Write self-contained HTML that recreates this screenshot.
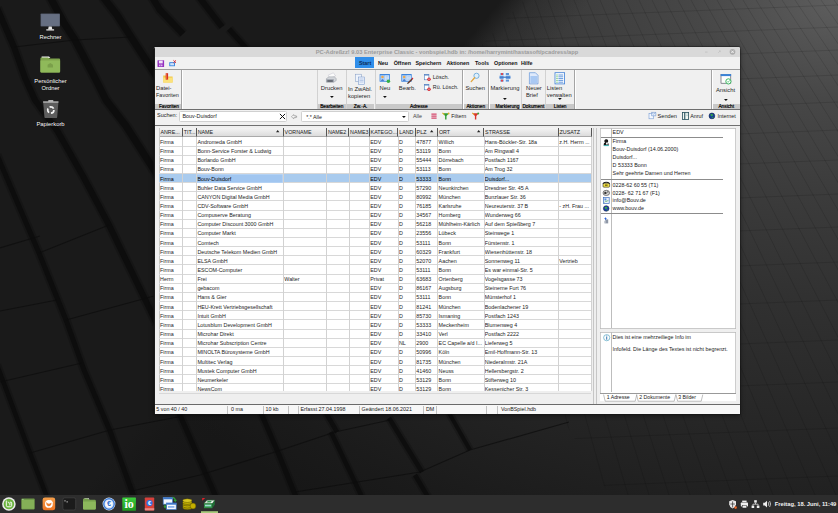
<!DOCTYPE html>
<html lang="de"><head><meta charset="utf-8"><title>PC-Adreßzz!</title>
<style>
html,body{margin:0;padding:0;}
body{width:838px;height:513px;overflow:hidden;position:relative;background:#1b1b1b;font-family:"Liberation Sans",sans-serif;font-size:5.35px;color:#1a1a1a;}
div,span{position:absolute;white-space:nowrap;box-sizing:border-box;}
svg{position:absolute;overflow:visible;}
.t{line-height:9px;height:9px;}
.dl{font-family:"Liberation Sans",sans-serif;font-size:5.83px;color:#fff;text-align:center;text-shadow:0 0.4px 0.8px #000;line-height:7.3px;}
.win{left:154px;top:47px;width:586px;height:367.2px;background:#efefef;}
.tb{left:0;top:0;width:586px;height:10px;background:#d9d9d9;}
.title{left:0;width:586px;top:0;height:10px;line-height:10.5px;text-align:center;font-family:"Liberation Sans",sans-serif;font-weight:bold;font-size:5.73px;color:#9b9b9b;}
.menu span{font-weight:bold;font-size:5.35px;top:0;line-height:12px;color:#111;}
.rb{font-size:5.8px;color:#262626;text-align:left;line-height:6.6px;}
.gl{background:#c9c9c9;height:6px;top:56.5px;font-size:4.8px;line-height:6.6px;text-align:center;color:#000;-webkit-text-stroke:0.18px #000;}
.vs{width:1.6px;top:23px;height:39.5px;background:linear-gradient(90deg,#a4a4a4 0,#a4a4a4 40%,#fff 60%);}
.hd{top:0;height:9.6px;background:linear-gradient(#f4f4f4,#dcdcdc);border-right:0.8px solid #555;border-bottom:0.6px solid #aaa;font-size:5.35px;line-height:9.6px;padding-left:0.8px;color:#1a1a1a;overflow:hidden;}
.row{left:0;height:9.15px;width:432px;border-bottom:0.55px solid #d8d8d8;}
.row span{top:0.56px;line-height:9.15px;height:9px;overflow:hidden;color:#1c1c1c;padding-left:1.5px;}
.sel{background:#a9cbee;}
.sel span{color:#000;}
.sb span{top:0;line-height:9.6px;font-size:5.35px;color:#222;}
.sb i{position:absolute;top:1.5px;height:8px;width:0.7px;background:#c2c2c2;}
.rp span{font-size:5.35px;color:#222;line-height:7.8px;}
</style></head><body>

<div id="wall" style="left:0;top:0;width:838px;height:495px;background:
linear-gradient(130.4deg, #1a1a1a 0%, #1a1a1a 39.8%, rgba(26,26,26,0.35) 42.4%, rgba(26,26,26,0) 47%),
radial-gradient(ellipse 880px 620px at 100% 0%, #5e5e5e 0%, #525252 8%, #474747 16%, #3b3b3b 32%, #313131 48%, #292929 64%, #222 78%, #1b1b1b 91%, #171717 100%);"></div>
<svg width="838" height="495" viewBox="0 0 838 495" style="left:0;top:0">
<g stroke="#0b0b0b" fill="none" opacity="0.28" stroke-linejoin="round">
<path d="M-3,8 L14,47 L25,78 L35,100 L58,132 L84,178 L109,225 L157,324" stroke-width="10.0"/>
<path d="M50,-3 L64,23 L75,40 L97,82 L106,100 L126,126 L158,176" stroke-width="11.0"/>
<path d="M103,-3 L117,15 L131,37 L157,77" stroke-width="11.0"/>
<path d="M152,-3 L160,10 L183,34" stroke-width="10.5"/>
<path d="M199,-3 L222,27" stroke-width="10.0"/>
<path d="M229,29 L247,49" stroke-width="9.0"/>
<path d="M-3,155 L39,253 L66,320 L84,370 L110,431 L134,497" stroke-width="9.0"/>
<path d="M-3,365 L30,453 L47,497" stroke-width="8.5"/>
<path d="M179,413 L216,497" stroke-width="9.0"/>
<path d="M261,413 L277,450 L296,497" stroke-width="9.0"/>
<path d="M326,413 L337,432 M331,432 L362,497" stroke-width="8.5"/>
<path d="M389,418 L422,472 M415,475 L428,497" stroke-width="8.5"/>
<path d="M449,413 L470,450" stroke-width="8.0"/>
</g>
<g stroke="#0b0b0b" fill="none" opacity="0.75" stroke-linejoin="round">
<path d="M-3,8 L14,47 L25,78 L35,100 L58,132 L84,178 L109,225 L157,324" stroke-width="6"/>
<path d="M50,-3 L64,23 L75,40 L97,82 L106,100 L126,126 L158,176" stroke-width="7"/>
<path d="M103,-3 L117,15 L131,37 L157,77" stroke-width="7"/>
<path d="M152,-3 L160,10 L183,34" stroke-width="6.5"/>
<path d="M199,-3 L222,27" stroke-width="6"/>
<path d="M229,29 L247,49" stroke-width="5"/>
<path d="M-3,155 L39,253 L66,320 L84,370 L110,431 L134,497" stroke-width="5"/>
<path d="M-3,365 L30,453 L47,497" stroke-width="4.5"/>
<path d="M179,413 L216,497" stroke-width="5"/>
<path d="M261,413 L277,450 L296,497" stroke-width="5"/>
<path d="M326,413 L337,432 M331,432 L362,497" stroke-width="4.5"/>
<path d="M389,418 L422,472 M415,475 L428,497" stroke-width="4.5"/>
<path d="M449,413 L470,450" stroke-width="4"/>
</g>
<g stroke="#0d0d0d" stroke-width="1.2" opacity="0.7" fill="none">
<path d="M0,311 L57,300 M0,382 L82,363 M30,453 L110,430 L183,416 M132,491 L200,475 L275,452 L335,432 L390,420 M0,248 L40,236 M66,320 L154,296 M39,253 L109,225 M295,492 L420,472 L470,450 L569,422 M14,47 L75,40 L131,37"/>
</g>
<defs><clipPath id="lit"><polygon points="524,0 838,0 838,495 610,495 560,415 480,47"/></clipPath></defs>
<g stroke="#000" stroke-width="0.7" opacity="0.17" fill="none" clip-path="url(#lit)">
<path d="M440,21 L838,5 M440,43 L838,27 M440,66 L838,50 M440,91 L838,75 M440,118 L838,102 M440,146 L838,130 M440,176 L838,160 M440,210 L838,194 M440,243 L838,227 M440,278 L838,262 M440,316 L838,300 M440,356 L838,340 M440,398 L838,382 M440,444 L838,428 M440,492 L838,476 M470,0 L607,495 M483,0 L628,495 M496,0 L649,495 M509,0 L669,495 M522,0 L690,495 M535,0 L711,495 M548,0 L732,495 M561,0 L753,495 M574,0 L773,495 M587,0 L794,495 M600,0 L815,495 M613,0 L836,495 M626,0 L857,495 M639,0 L877,495 M652,0 L898,495 M665,0 L919,495 M678,0 L940,495 M691,0 L961,495 M704,0 L981,495 M717,0 L1002,495 M730,0 L1023,495 M743,0 L1044,495 M756,0 L1065,495 M769,0 L1085,495 M782,0 L1106,495 M795,0 L1127,495 M808,0 L1148,495 M821,0 L1169,495 M834,0 L1189,495 M847,0 L1210,495 M860,0 L1231,495 M873,0 L1252,495 M886,0 L1273,495 M899,0 L1293,495 M912,0 L1314,495 M925,0 L1335,495 M938,0 L1356,495 M951,0 L1377,495 M964,0 L1397,495 M977,0 L1418,495 M990,0 L1439,495 M1003,0 L1460,495 M1016,0 L1481,495 M1029,0 L1501,495 M1042,0 L1522,495 M1055,0 L1543,495 M1068,0 L1564,495 M1081,0 L1585,495 M1094,0 L1605,495 M457,0 L586,495 M444,0 L565,495 M431,0 L545,495 M418,0 L524,495 M405,0 L503,495 M392,0 L482,495 M379,0 L461,495 M366,0 L441,495 M353,0 L420,495 M340,0 L399,495 M327,0 L378,495 M314,0 L357,495 M301,0 L337,495 M288,0 L316,495 M275,0 L295,495 M262,0 L274,495 M249,0 L253,495 M236,0 L233,495 M223,0 L212,495 M210,0 L191,495 M197,0 L170,495 M184,0 L149,495 M171,0 L129,495 M158,0 L108,495"/>
</g>
</svg>

<!-- desktop icons -->
<svg style="left:40px;top:13px" width="21" height="19" viewBox="0 0 21 19"><rect x="0.5" y="0.5" width="19.5" height="13" rx="0.8" fill="#4f5767"/><rect x="1.1" y="1.1" width="18.3" height="11.8" fill="#666f82"/><path d="M8.7,13.5 h3 l0.6,3 h-4.2z" fill="#e8e8e8"/><rect x="6.3" y="16.3" width="7.8" height="1.2" fill="#f4f4f4"/></svg>
<div class="dl" style="left:20px;top:34px;width:61px">Rechner</div>
<svg style="left:40px;top:56.3px" width="22" height="19" viewBox="0 0 22 19"><path d="M1.6,0.4 h7.4 l1.4,1.6 h-8.8z" fill="#f2f2f2"/><path d="M0.4,2.4 q0,-1 1,-1 h6.6 l1.5,1.2 h9.6 q1,0 1,1 v11.8 q0,1 -1,1 h-17.7 q-1,0 -1,-1z" fill="#7ea34c"/><path d="M0.4,4.4 h19.7 v11 q0,1 -1,1 h-17.7 q-1,0 -1,-1z" fill="#8fb95a"/><path d="M7.6,11.6 v-2.8 l2.7,-1.9 l2.7,1.9 v2.8z" fill="#7a9f4a"/></svg>
<div class="dl" style="left:20px;top:77.5px;width:61px">Persönlicher<br>Ordner</div>
<svg style="left:41.5px;top:99px" width="18" height="21" viewBox="0 0 18 21"><path d="M1.2,3.3 h15.2 l-1.2,14.6 q-0.1,1.2 -1.3,1.2 h-10.2 q-1.2,0 -1.3,-1.2z" fill="#5d5d5d"/><rect x="1" y="2.4" width="15.6" height="1.1" rx="0.4" fill="#f0f0f0"/><rect x="6.2" y="1.2" width="5.2" height="1.3" rx="0.5" fill="#e4e4e4"/><circle cx="8.8" cy="11" r="3.1" fill="none" stroke="#f4f4f4" stroke-width="1.7" stroke-dasharray="4.6 1.9"/></svg>
<div class="dl" style="left:20px;top:121px;width:61px">Papierkorb</div>

<div class="win" style="border-radius:1.5px 1.5px 0 0;overflow:hidden;box-shadow:0 0 0 0.7px rgba(20,20,20,0.5),0 1px 5px rgba(0,0,0,0.5)">
<div class="tb"></div><div class="title">PC-Adreßzz! 9.03 Enterprise Classic - vonbspiel.hdb in: /home/harrymint/hastasoft/pcadress/app</div>
<svg style="left:540px;top:0" width="46" height="10" viewBox="0 0 46 10"><rect x="11" y="4.7" width="2.6" height="0.7" fill="#bcbcbc"/><path d="M24.2,5.9 l2,-2 M25,3.8 h1.3 v1.3" stroke="#bcbcbc" stroke-width="0.6" fill="none"/><circle cx="38.5" cy="4.8" r="2.85" fill="#adadad"/><path d="M37.3,3.6 l2.4,2.4 M39.7,3.6 l-2.4,2.4" stroke="#f2f2f2" stroke-width="0.95"/></svg>
<div style="left:0;top:10px;width:586px;height:12px;background:#f1f1f1"></div>
<svg style="left:3.3px;top:12.8px" width="20" height="8" viewBox="0 0 20 8"><rect x="0.5" y="0.3" width="6.6" height="6.6" rx="0.5" fill="#9430c0"/><rect x="1.9" y="0.6" width="3.8" height="2.8" fill="#f1e6f8"/><rect x="2.2" y="4.6" width="3.2" height="1.6" fill="#ead6f4"/><rect x="3.4" y="4.6" width="0.8" height="1.6" fill="#9430c0"/><rect x="12.3" y="2.2" width="5.6" height="4" fill="#2f7fe0"/><rect x="13.2" y="3.1" width="3.8" height="2.3" fill="#cfe3fb"/><path d="M16.4,0.3 l2.6,2.6 M19,0.3 l-2.6,2.6" stroke="#d8232a" stroke-width="0.9"/></svg>
<div style="left:201px;top:10.2px;width:18.6px;height:11.3px;background:#2f8eea"></div>
<div class="menu" style="left:0;top:10px;width:586px;height:12px">
<span style="left:205px;color:#0b2a55;">Start</span>
<span style="left:224px;">Neu</span>
<span style="left:239.7px;">Öffnen</span>
<span style="left:261.5px;">Speichern</span>
<span style="left:292.5px;">Aktionen</span>
<span style="left:321px;">Tools</span>
<span style="left:340px;">Optionen</span>
<span style="left:367px;">Hilfe</span>
</div>
<div style="left:0;top:21.7px;width:586px;height:0.8px;background:#9c9c9c"></div>
<div style="left:0;top:22.9px;width:586px;height:39.4px;background:#f0f0f0"></div>
<div class="gl" style="left:0px;width:27px;padding-left:2.8px;">Favoriten</div>
<div class="gl" style="left:164px;width:27.5px;">Bearbeiten</div>
<div class="gl" style="left:193px;width:27.30000000000001px;">Zw.-A.</div>
<div class="gl" style="left:222px;width:85.80000000000001px;">Adresse</div>
<div class="gl" style="left:309.5px;width:24.5px;">Aktionen</div>
<div class="gl" style="left:335.6px;width:30.69999999999999px;padding-left:5px;">Markierung</div>
<div class="gl" style="left:368px;width:22.69999999999999px;">Dokument</div>
<div class="gl" style="left:392.3px;width:27.69999999999999px;">Listen</div>
<div class="gl" style="left:558.5px;width:27.5px;">Ansicht</div>
<div class="vs" style="left:27px"></div>
<div class="vs" style="left:162.5px"></div>
<div class="vs" style="left:191.7px"></div>
<div class="vs" style="left:220.5px"></div>
<div class="vs" style="left:308px"></div>
<div class="vs" style="left:334.2px"></div>
<div class="vs" style="left:366.5px"></div>
<div class="vs" style="left:390.9px"></div>
<div class="vs" style="left:420.2px"></div>
<div class="vs" style="left:557px"></div>
<div style="left:0;top:62.3px;width:586px;height:0.9px;background:#6e6e6e"></div>
<div class="rb" style="left:2px;top:38px">Datei-<br><span style="position:static;font-size:5.5px">Favoriten</span></div>
<div class="rb" style="left:166.8px;top:38px">Drucken</div>
<svg style="left:176.1px;top:49.4px" width="3.8" height="2.1" viewBox="0 0 3.8 2.1"><path d="M0,0 h3.8 l-1.9,2.1z" fill="#111"/></svg>
<div class="rb" style="left:194px;top:39.4px">In ZwAbl.<br>kopieren</div>
<div class="rb" style="left:225.6px;top:38px">Neu</div>
<svg style="left:229.1px;top:49.4px" width="3.8" height="2.1" viewBox="0 0 3.8 2.1"><path d="M0,0 h3.8 l-1.9,2.1z" fill="#111"/></svg>
<div class="rb" style="left:244.8px;top:38px">Bearb.</div>
<div class="rb" style="left:278.8px;top:26.8px;font-size:5.5px">Lösch.</div>
<div class="rb" style="left:278.8px;top:37px;font-size:5.35px">Rü. Lösch.</div>
<div class="rb" style="left:311.4px;top:38px">Suchen</div>
<div class="rb" style="left:336.4px;top:38px">Markierung</div>
<svg style="left:349.1px;top:50.5px" width="3.8" height="2.1" viewBox="0 0 3.8 2.1"><path d="M0,0 h3.8 l-1.9,2.1z" fill="#111"/></svg>
<div class="rb" style="left:372px;top:38px">Neuer<br>Brief</div>
<div class="rb" style="left:392.8px;top:38px">Listen<br>verwalten</div>
<svg style="left:404.1px;top:51.4px" width="3.8" height="2.1" viewBox="0 0 3.8 2.1"><path d="M0,0 h3.8 l-1.9,2.1z" fill="#111"/></svg>
<div class="rb" style="left:562px;top:39.6px">Ansicht</div>
<svg style="left:570.1px;top:52px" width="3.8" height="2.1" viewBox="0 0 3.8 2.1"><path d="M0,0 h3.8 l-1.9,2.1z" fill="#111"/></svg>
<svg style="left:0;top:23px" width="586" height="40" viewBox="0 0 586 40">
<!-- Datei-Favoriten -->
<g transform="translate(0.9,0)"><path d="M8.3,5.5 h3 l0.8,0.9 h5.6 v6.2 h-9.4z" fill="#f1c84a"/><rect x="8.3" y="7.6" width="9.4" height="5" fill="#fbe27a"/><rect x="10.8" y="3.2" width="2.4" height="6.4" fill="#d12a1f"/><rect x="11.4" y="3.2" width="0.8" height="6.4" fill="#f27b4e"/></g>
<!-- Drucken -->
<g><path d="M174.2,5.2 l5.2,-2.4 l2.2,3.2 l-5.6,2.4z" fill="#fbfbfb" stroke="#aab" stroke-width="0.35"/><path d="M172.4,8.6 l2.6,-1.8 h5.2 l2,1.6 v2.2 l-2.4,1.6 h-7.4z" fill="#d2d5da" stroke="#777c85" stroke-width="0.35"/><path d="M172.4,9.2 h7.4 v3 h-7.4z" fill="#9a9fa8"/><path d="M173.4,10.6 h5.4 v1 h-5.4z" fill="#3b3f46"/></g>
<!-- Kopieren -->
<g><rect x="201.3" y="4.2" width="6" height="7.2" fill="#eef3fb" stroke="#7f97c0" stroke-width="0.5"/><rect x="204.3" y="7" width="6.4" height="7.6" fill="#eaf0fa" stroke="#6f8fc5" stroke-width="0.5"/><path d="M205.5,9 h4 M205.5,10.5 h4 M205.5,12 h4" stroke="#8aa6d6" stroke-width="0.5"/></g>
<!-- Neu -->
<g><rect x="225.6" y="3.9" width="10.4" height="7.8" rx="0.5" fill="#3f86dd"/><rect x="226.29999999999998" y="5.2" width="9" height="5.8" fill="#a9cdf6"/><rect x="231.0" y="5.6" width="3.8" height="4.8" fill="#dcebfc"/><circle cx="228.5" cy="6.9" r="1.25" fill="#f2a84a"/><path d="M226.79999999999998,10.8 q1.7,-3.2 3.4,0z" fill="#2f62c0"/><path d="M231.5,6.6 h2.8 M231.5,8 h2.8 M231.5,9.4 h2.8" stroke="#8fb4e8" stroke-width="0.5"/><circle cx="234.4" cy="11.3" r="1.75" fill="#35b045"/></g>
<!-- Bearb -->
<g><rect x="247.3" y="3.9" width="10.4" height="7.8" rx="0.5" fill="#3f86dd"/><rect x="248.0" y="5.2" width="9" height="5.8" fill="#a9cdf6"/><rect x="252.70000000000002" y="5.6" width="3.8" height="4.8" fill="#dcebfc"/><circle cx="250.20000000000002" cy="6.9" r="1.25" fill="#f2a84a"/><path d="M248.5,10.8 q1.7,-3.2 3.4,0z" fill="#2f62c0"/><path d="M253.20000000000002,6.6 h2.8 M253.20000000000002,8 h2.8 M253.20000000000002,9.4 h2.8" stroke="#8fb4e8" stroke-width="0.5"/><path d="M253.6,12.6 l4,-4.2 l1.1,1 l-4,4.2z" fill="#6a3a2a"/><path d="M257.6,8.4 l1.1,1 l0.7,-0.8 l-1.1,-1z" fill="#d8232a"/><path d="M253.6,12.6 l1.1,1 l-1.5,0.5z" fill="#222"/></g>
<!-- Loesch -->
<g><rect x="270.3" y="4.4" width="4.6" height="5.4" fill="#fff" stroke="#4f7fc0" stroke-width="0.6"/><rect x="270.3" y="4.4" width="4.6" height="1.1" fill="#4f7fc0"/><circle cx="275" cy="9.2" r="1.7" fill="#d8232a"/><path d="M274.3,8.5 l1.4,1.4 M275.7,8.5 l-1.4,1.4" stroke="#fff" stroke-width="0.45"/></g>
<g><rect x="270.3" y="14.4" width="4.6" height="5.4" fill="#fff" stroke="#4f7fc0" stroke-width="0.6"/><rect x="270.3" y="14.4" width="4.6" height="1.1" fill="#4f7fc0"/><circle cx="275" cy="19.2" r="1.7" fill="#d8232a"/><path d="M274.3,18.5 l1.4,1.4 M275.7,18.5 l-1.4,1.4" stroke="#fff" stroke-width="0.45"/></g>
<!-- Suchen -->
<g><circle cx="322.5" cy="5.8" r="2.6" fill="#dff0fb" stroke="#5c9fd6" stroke-width="0.8"/><path d="M320.6,7.8 l-3.4,3.8" stroke="#e2a53a" stroke-width="1.3" stroke-linecap="round"/></g>
<!-- Markierung -->
<g><rect x="346.4" y="3" width="8.6" height="2" fill="#5d95d8"/><rect x="346.4" y="9.6" width="8.6" height="2" fill="#5d95d8"/><rect x="345.6" y="5.6" width="10.8" height="3.4" fill="#6da0e0"/><rect x="349.6" y="2.4" width="2.2" height="10" fill="#e9f1fc"/><rect x="347" y="3.1" width="2" height="1.8" fill="#e5434a"/><rect x="347" y="9.7" width="2" height="1.8" fill="#e5434a"/><rect x="345.6" y="6.6" width="10.8" height="1.2" fill="#3f78c8"/></g>
<!-- Neuer Brief -->
<g><path d="M375.4,2.7 h6 l2.6,2.6 v8.6 h-8.6z" fill="#dfeafb" stroke="#4d86d3" stroke-width="0.6"/><path d="M376.4,6 h6.6 v7 h-6.6z" fill="#a9c9f3"/></g>
<!-- Listen -->
<g><rect x="401" y="2.7" width="9.6" height="11.2" fill="#fff" stroke="#3e7fd6" stroke-width="0.8"/><path d="M404.4,5 h4.8 M404.4,6.8 h4.8 M404.4,8.6 h4.8 M404.4,10.4 h4.8 M404.4,12.2 h4.8" stroke="#3e7fd6" stroke-width="0.8"/><path d="M402.4,5 h1.2 M402.4,6.8 h1.2 M402.4,8.6 h1.2 M402.4,10.4 h1.2 M402.4,12.2 h1.2" stroke="#3fae4a" stroke-width="0.9"/></g>
<!-- Ansicht -->
<g><rect x="567" y="4.4" width="9.8" height="8.8" fill="#fdfdfd" stroke="#334" stroke-width="0.55"/><rect x="566.7" y="4.1" width="10.4" height="2" fill="#3a83d8"/><circle cx="574.4" cy="11.4" r="2.6" fill="#fff" stroke="#2fb257" stroke-width="0.95"/><path d="M573.2,11.4 l0.9,0.9 l1.6,-1.9" stroke="#2fb257" stroke-width="0.7" fill="none"/></g>
</svg>
<div style="left:0;top:63.2px;width:586px;height:15.4px;background:#f1f1f1"></div>
<div style="left:0;top:78.4px;width:586px;height:0.9px;background:#707070"></div>
<span style="left:3px;top:64.4px;line-height:8px;font-size:5.5px;color:#222">Suchen:</span>
<div style="left:24.6px;top:64.2px;width:108.6px;height:11px;background:#fff;border:0.6px solid #d0d0d0;border-radius:1.4px"></div>
<span style="left:28.5px;top:65.4px;line-height:8px;font-size:5.4px;color:#222">Bouv-Duisdorf</span>
<svg style="left:125px;top:66.3px" width="8" height="8" viewBox="0 0 8 8"><path d="M0.9,0.9 l5.2,5.2 M6.1,0.9 l-5.2,5.2" stroke="#111" stroke-width="1"/></svg>
<svg style="left:136.5px;top:66.7px" width="8" height="6" viewBox="0 0 8 6"><path d="M0.4,2.7 l2.4,-2.1 v1.2 h2.2 v1.8 h-2.2 v1.2z" fill="#fafafa" stroke="#777" stroke-width="0.5"/><path d="M5.6,1.8 v1.8" stroke="#777" stroke-width="0.5"/></svg>
<div style="left:147.4px;top:64.2px;width:108px;height:11px;background:#fff;border:0.6px solid #d0d0d0;border-radius:1.4px"></div>
<span style="left:152.3px;top:65.7px;line-height:8px;font-size:5.3px;color:#222">*.* Alle</span>
<svg style="left:248.1px;top:69.2px" width="3.8" height="2.1" viewBox="0 0 3.8 2.1"><path d="M0,0 h3.8 l-1.9,2.1z" fill="#111"/></svg>
<span style="left:259px;top:64.6px;line-height:8px;font-size:5.35px;color:#444">Alle</span>
<svg style="left:276px;top:64.6px" width="60" height="9" viewBox="0 0 60 9">
<path d="M1.4,2 h5.2 M1.4,4.1 h5.2 M1.4,6.2 h5.2" stroke="#d3476b" stroke-width="1.25"/>
<path d="M12.6,1.2 h6.4 l-2.5,2.9 v3.4 h-1.4 v-3.4z" fill="#2f9e35"/><path d="M12.4,0.8 l2,1.8" stroke="#e0b020" stroke-width="1.1"/><circle cx="18.6" cy="1.5" r="0.9" fill="#e0b020"/>
<path d="M42.4,1.2 h6.4 l-2.5,2.9 v3.4 h-1.4 v-3.4z" fill="#d9342b"/><path d="M42.2,0.8 l2,1.8" stroke="#e3a72a" stroke-width="1.1"/><circle cx="48.2" cy="1.6" r="1" fill="#3aa33a"/>
</svg>
<span style="left:297.3px;top:64.6px;line-height:8px;font-size:5.35px;color:#222">Filtern</span>
<svg style="left:494px;top:64px" width="92" height="10" viewBox="0 0 92 10">
<rect x="1" y="2.4" width="4.6" height="5.4" fill="#f4f8ff" stroke="#6c93cf" stroke-width="0.55"/><path d="M3.6,1.4 h4.2 v3.4 h-4.2z" fill="#e4eefc" stroke="#5c86c6" stroke-width="0.5"/><path d="M3.6,1.4 l2.1,1.8 l2.1,-1.8" stroke="#5c86c6" stroke-width="0.4" fill="none"/>
<rect x="34.4" y="1.4" width="6.2" height="7" fill="#f2f7f4" stroke="#234f5c" stroke-width="0.8"/><rect x="36.2" y="1.4" width="1.1" height="7" fill="#234f5c"/><path d="M38.2,3 h1.6 M38.2,4.6 h1.6" stroke="#7aa" stroke-width="0.5"/>
<circle cx="63.9" cy="4.9" r="2.9" fill="#173f9a"/><path d="M62.2,3.4 q1.8,-1.2 3,0.4 q-0.4,1.8 -2,1.4z M64,6.2 q1.6,-0.4 1.8,0.6 q-1.2,1 -1.8,-0.6z" fill="#36a844"/><circle cx="63.9" cy="4.9" r="2.9" fill="none" stroke="#0a1a3a" stroke-width="0.5"/>
</svg>
<span style="left:503.6px;top:64.5px;line-height:8px;font-size:5.6px;color:#222">Senden</span>
<span style="left:536.3px;top:64.5px;line-height:8px;font-size:5.35px;color:#222">Anruf</span>
<span style="left:563.5px;top:64.5px;line-height:8px;font-size:5.35px;color:#222">Internet</span>
<div style="left:5px;top:80.8px;width:432.5px;height:263.2px;background:#fff;overflow:hidden;box-shadow:inset 0.7px 0 0 #b0b0b0">
<div class="hd" style="left:0.6px;width:23.3px">ANRE...</div>
<div class="hd" style="left:23.9px;width:14.0px">TIT...</div>
<div class="hd" style="left:37.9px;width:86.9px">NAME</div>
<div class="hd" style="left:124.8px;width:43.3px">VORNAME</div>
<div class="hd" style="left:168.1px;width:22.2px">NAME2</div>
<div class="hd" style="left:190.3px;width:20.5px">NAME3</div>
<div class="hd" style="left:210.8px;width:28.6px">KATEGO...</div>
<div class="hd" style="left:239.4px;width:17.4px">LAND</div>
<div class="hd" style="left:256.8px;width:22.3px">PLZ</div>
<div class="hd" style="left:279.1px;width:46.2px">ORT</div>
<div class="hd" style="left:325.3px;width:74.5px">STRASSE</div>
<div class="hd" style="left:399.8px;width:32.8px">ZUSATZ</div>
<svg style="left:116.9px;top:1.9px" width="3.4" height="2.2" viewBox="0 0 3.4 2.2"><path d="M0,2.2 h3.4 l-1.7,-2.2z" fill="#222"/></svg>
<svg style="left:271.4px;top:1.9px" width="3.4" height="2.2" viewBox="0 0 3.4 2.2"><path d="M0,2.2 h3.4 l-1.7,-2.2z" fill="#222"/></svg>
<svg style="left:317.5px;top:1.9px" width="3.4" height="2.2" viewBox="0 0 3.4 2.2"><path d="M0,2.2 h3.4 l-1.7,-2.2z" fill="#222"/></svg>
<div class="row" style="top:9.60px">
<span style="left:-0.4px;width:22.9px">Firma</span>
<span style="left:36.9px;width:86.5px">Andromeda GmbH</span>
<span style="left:209.8px;width:28.2px">EDV</span>
<span style="left:238.4px;width:17.0px">D</span>
<span style="left:255.8px;width:21.9px">47877</span>
<span style="left:278.1px;width:45.8px">Willich</span>
<span style="left:324.3px;width:74.1px">Hans-Böckler-Str. 18a</span>
<span style="left:398.8px;width:32.4px">z.H. Herrn ...</span>
</div>
<div class="row" style="top:18.75px">
<span style="left:-0.4px;width:22.9px">Firma</span>
<span style="left:36.9px;width:86.5px">Bonn-Service Forster &amp; Ludwig</span>
<span style="left:209.8px;width:28.2px">EDV</span>
<span style="left:238.4px;width:17.0px">D</span>
<span style="left:255.8px;width:21.9px">53119</span>
<span style="left:278.1px;width:45.8px">Bonn</span>
<span style="left:324.3px;width:74.1px">Am Ringwall 4</span>
</div>
<div class="row" style="top:27.90px">
<span style="left:-0.4px;width:22.9px">Firma</span>
<span style="left:36.9px;width:86.5px">Borlando GmbH</span>
<span style="left:209.8px;width:28.2px">EDV</span>
<span style="left:238.4px;width:17.0px">D</span>
<span style="left:255.8px;width:21.9px">55444</span>
<span style="left:278.1px;width:45.8px">Dörrebach</span>
<span style="left:324.3px;width:74.1px">Postfach 1167</span>
</div>
<div class="row" style="top:37.05px">
<span style="left:-0.4px;width:22.9px">Firma</span>
<span style="left:36.9px;width:86.5px">Bouv-Bonn</span>
<span style="left:209.8px;width:28.2px">EDV</span>
<span style="left:238.4px;width:17.0px">D</span>
<span style="left:255.8px;width:21.9px">53113</span>
<span style="left:278.1px;width:45.8px">Bonn</span>
<span style="left:324.3px;width:74.1px">Am Trog 32</span>
</div>
<div class="row sel" style="top:46.20px">
<div style="left:37.3px;top:0;width:86.3px;height:8.6px;background:#a1c6f0;box-shadow:inset 0 0 0 0.5px #c6dcf5"></div>
<span style="left:-0.4px;width:22.9px">Firma</span>
<span style="left:36.9px;width:86.5px">Bouv-Duisdorf</span>
<span style="left:209.8px;width:28.2px">EDV</span>
<span style="left:238.4px;width:17.0px">D</span>
<span style="left:255.8px;width:21.9px">53333</span>
<span style="left:278.1px;width:45.8px">Bonn</span>
<span style="left:324.3px;width:74.1px">Duisdorf...</span>
</div>
<div class="row" style="top:55.35px">
<span style="left:-0.4px;width:22.9px">Firma</span>
<span style="left:36.9px;width:86.5px">Buhler Data Service GmbH</span>
<span style="left:209.8px;width:28.2px">EDV</span>
<span style="left:238.4px;width:17.0px">D</span>
<span style="left:255.8px;width:21.9px">57290</span>
<span style="left:278.1px;width:45.8px">Neunkirchen</span>
<span style="left:324.3px;width:74.1px">Dresdner Str. 45 A</span>
</div>
<div class="row" style="top:64.50px">
<span style="left:-0.4px;width:22.9px">Firma</span>
<span style="left:36.9px;width:86.5px">CANYON Digital Media GmbH</span>
<span style="left:209.8px;width:28.2px">EDV</span>
<span style="left:238.4px;width:17.0px">D</span>
<span style="left:255.8px;width:21.9px">80992</span>
<span style="left:278.1px;width:45.8px">München</span>
<span style="left:324.3px;width:74.1px">Bunzlauer Str. 36</span>
</div>
<div class="row" style="top:73.65px">
<span style="left:-0.4px;width:22.9px">Firma</span>
<span style="left:36.9px;width:86.5px">CDV-Software GmbH</span>
<span style="left:209.8px;width:28.2px">EDV</span>
<span style="left:238.4px;width:17.0px">D</span>
<span style="left:255.8px;width:21.9px">76185</span>
<span style="left:278.1px;width:45.8px">Karlsruhe</span>
<span style="left:324.3px;width:74.1px">Neureuterstr. 37 B</span>
<span style="left:398.8px;width:32.4px">- zH. Frau ...</span>
</div>
<div class="row" style="top:82.80px">
<span style="left:-0.4px;width:22.9px">Firma</span>
<span style="left:36.9px;width:86.5px">Compuserve Beratung</span>
<span style="left:209.8px;width:28.2px">EDV</span>
<span style="left:238.4px;width:17.0px">D</span>
<span style="left:255.8px;width:21.9px">34567</span>
<span style="left:278.1px;width:45.8px">Homberg</span>
<span style="left:324.3px;width:74.1px">Wunderweg 66</span>
</div>
<div class="row" style="top:91.95px">
<span style="left:-0.4px;width:22.9px">Firma</span>
<span style="left:36.9px;width:86.5px">Computer Discount 3000 GmbH</span>
<span style="left:209.8px;width:28.2px">EDV</span>
<span style="left:238.4px;width:17.0px">D</span>
<span style="left:255.8px;width:21.9px">56218</span>
<span style="left:278.1px;width:45.8px">Mühlheim-Kärlich</span>
<span style="left:324.3px;width:74.1px">Auf dem Spießberg 7</span>
</div>
<div class="row" style="top:101.10px">
<span style="left:-0.4px;width:22.9px">Firma</span>
<span style="left:36.9px;width:86.5px">Computer Markt</span>
<span style="left:209.8px;width:28.2px">EDV</span>
<span style="left:238.4px;width:17.0px">D</span>
<span style="left:255.8px;width:21.9px">23556</span>
<span style="left:278.1px;width:45.8px">Lübeck</span>
<span style="left:324.3px;width:74.1px">Steinwege 1</span>
</div>
<div class="row" style="top:110.25px">
<span style="left:-0.4px;width:22.9px">Firma</span>
<span style="left:36.9px;width:86.5px">Comtech</span>
<span style="left:209.8px;width:28.2px">EDV</span>
<span style="left:238.4px;width:17.0px">D</span>
<span style="left:255.8px;width:21.9px">53111</span>
<span style="left:278.1px;width:45.8px">Bonn</span>
<span style="left:324.3px;width:74.1px">Fürstenstr. 1</span>
</div>
<div class="row" style="top:119.40px">
<span style="left:-0.4px;width:22.9px">Firma</span>
<span style="left:36.9px;width:86.5px">Deutsche Telekom Medien GmbH</span>
<span style="left:209.8px;width:28.2px">EDV</span>
<span style="left:238.4px;width:17.0px">D</span>
<span style="left:255.8px;width:21.9px">60329</span>
<span style="left:278.1px;width:45.8px">Frankfurt</span>
<span style="left:324.3px;width:74.1px">Wiesenhüttenstr. 18</span>
</div>
<div class="row" style="top:128.55px">
<span style="left:-0.4px;width:22.9px">Firma</span>
<span style="left:36.9px;width:86.5px">ELSA GmbH</span>
<span style="left:209.8px;width:28.2px">EDV</span>
<span style="left:238.4px;width:17.0px">D</span>
<span style="left:255.8px;width:21.9px">52070</span>
<span style="left:278.1px;width:45.8px">Aachen</span>
<span style="left:324.3px;width:74.1px">Sonnenweg 11</span>
<span style="left:398.8px;width:32.4px">Vertrieb</span>
</div>
<div class="row" style="top:137.70px">
<span style="left:-0.4px;width:22.9px">Firma</span>
<span style="left:36.9px;width:86.5px">ESCOM-Computer</span>
<span style="left:209.8px;width:28.2px">EDV</span>
<span style="left:238.4px;width:17.0px">D</span>
<span style="left:255.8px;width:21.9px">53111</span>
<span style="left:278.1px;width:45.8px">Bonn</span>
<span style="left:324.3px;width:74.1px">Es war einmal-Str. 5</span>
</div>
<div class="row" style="top:146.85px">
<span style="left:-0.4px;width:22.9px">Herrn</span>
<span style="left:36.9px;width:86.5px">Frei</span>
<span style="left:123.8px;width:42.9px">Walter</span>
<span style="left:209.8px;width:28.2px">Privat</span>
<span style="left:238.4px;width:17.0px">D</span>
<span style="left:255.8px;width:21.9px">63683</span>
<span style="left:278.1px;width:45.8px">Ortenberg</span>
<span style="left:324.3px;width:74.1px">Vogelsgasse 73</span>
</div>
<div class="row" style="top:156.00px">
<span style="left:-0.4px;width:22.9px">Firma</span>
<span style="left:36.9px;width:86.5px">gebacom</span>
<span style="left:209.8px;width:28.2px">EDV</span>
<span style="left:238.4px;width:17.0px">D</span>
<span style="left:255.8px;width:21.9px">86167</span>
<span style="left:278.1px;width:45.8px">Augsburg</span>
<span style="left:324.3px;width:74.1px">Steinerne Furt 76</span>
</div>
<div class="row" style="top:165.15px">
<span style="left:-0.4px;width:22.9px">Firma</span>
<span style="left:36.9px;width:86.5px">Hans &amp; Gier</span>
<span style="left:209.8px;width:28.2px">EDV</span>
<span style="left:238.4px;width:17.0px">D</span>
<span style="left:255.8px;width:21.9px">53111</span>
<span style="left:278.1px;width:45.8px">Bonn</span>
<span style="left:324.3px;width:74.1px">Münsterhof 1</span>
</div>
<div class="row" style="top:174.30px">
<span style="left:-0.4px;width:22.9px">Firma</span>
<span style="left:36.9px;width:86.5px">HEU-Krett Vertriebsgesellschaft</span>
<span style="left:209.8px;width:28.2px">EDV</span>
<span style="left:238.4px;width:17.0px">D</span>
<span style="left:255.8px;width:21.9px">81241</span>
<span style="left:278.1px;width:45.8px">München</span>
<span style="left:324.3px;width:74.1px">Bodenlachener 19</span>
</div>
<div class="row" style="top:183.45px">
<span style="left:-0.4px;width:22.9px">Firma</span>
<span style="left:36.9px;width:86.5px">Intuit GmbH</span>
<span style="left:209.8px;width:28.2px">EDV</span>
<span style="left:238.4px;width:17.0px">D</span>
<span style="left:255.8px;width:21.9px">85730</span>
<span style="left:278.1px;width:45.8px">Ismaning</span>
<span style="left:324.3px;width:74.1px">Postfach 1243</span>
</div>
<div class="row" style="top:192.60px">
<span style="left:-0.4px;width:22.9px">Firma</span>
<span style="left:36.9px;width:86.5px">Lotusblum Development GmbH</span>
<span style="left:209.8px;width:28.2px">EDV</span>
<span style="left:238.4px;width:17.0px">D</span>
<span style="left:255.8px;width:21.9px">53333</span>
<span style="left:278.1px;width:45.8px">Meckenheim</span>
<span style="left:324.3px;width:74.1px">Blumenweg 4</span>
</div>
<div class="row" style="top:201.75px">
<span style="left:-0.4px;width:22.9px">Firma</span>
<span style="left:36.9px;width:86.5px">Microhar Direkt</span>
<span style="left:209.8px;width:28.2px">EDV</span>
<span style="left:238.4px;width:17.0px">D</span>
<span style="left:255.8px;width:21.9px">33410</span>
<span style="left:278.1px;width:45.8px">Verl</span>
<span style="left:324.3px;width:74.1px">Postfach 2222</span>
</div>
<div class="row" style="top:210.90px">
<span style="left:-0.4px;width:22.9px">Firma</span>
<span style="left:36.9px;width:86.5px">Microhar Subscription Centre</span>
<span style="left:209.8px;width:28.2px">EDV</span>
<span style="left:238.4px;width:17.0px">NL</span>
<span style="left:255.8px;width:21.9px">2900</span>
<span style="left:278.1px;width:45.8px">EC Capelle a/d I...</span>
<span style="left:324.3px;width:74.1px">Lieferweg 5</span>
</div>
<div class="row" style="top:220.05px">
<span style="left:-0.4px;width:22.9px">Firma</span>
<span style="left:36.9px;width:86.5px">MINOLTA Bürosysteme GmbH</span>
<span style="left:209.8px;width:28.2px">EDV</span>
<span style="left:238.4px;width:17.0px">D</span>
<span style="left:255.8px;width:21.9px">50996</span>
<span style="left:278.1px;width:45.8px">Köln</span>
<span style="left:324.3px;width:74.1px">Emil-Hoffmann-Str. 13</span>
</div>
<div class="row" style="top:229.20px">
<span style="left:-0.4px;width:22.9px">Firma</span>
<span style="left:36.9px;width:86.5px">Multitec Verlag</span>
<span style="left:209.8px;width:28.2px">EDV</span>
<span style="left:238.4px;width:17.0px">D</span>
<span style="left:255.8px;width:21.9px">81735</span>
<span style="left:278.1px;width:45.8px">München</span>
<span style="left:324.3px;width:74.1px">Niederalmstr. 21A</span>
</div>
<div class="row" style="top:238.35px">
<span style="left:-0.4px;width:22.9px">Firma</span>
<span style="left:36.9px;width:86.5px">Mustek Computer GmbH</span>
<span style="left:209.8px;width:28.2px">EDV</span>
<span style="left:238.4px;width:17.0px">D</span>
<span style="left:255.8px;width:21.9px">41460</span>
<span style="left:278.1px;width:45.8px">Neuss</span>
<span style="left:324.3px;width:74.1px">Hellersbergstr. 2</span>
</div>
<div class="row" style="top:247.50px">
<span style="left:-0.4px;width:22.9px">Firma</span>
<span style="left:36.9px;width:86.5px">Neumerkeler</span>
<span style="left:209.8px;width:28.2px">EDV</span>
<span style="left:238.4px;width:17.0px">D</span>
<span style="left:255.8px;width:21.9px">53129</span>
<span style="left:278.1px;width:45.8px">Bonn</span>
<span style="left:324.3px;width:74.1px">Stifterweg 10</span>
</div>
<div class="row" style="top:256.65px">
<span style="left:-0.4px;width:22.9px">Firma</span>
<span style="left:36.9px;width:86.5px">NewsCom</span>
<span style="left:209.8px;width:28.2px">EDV</span>
<span style="left:238.4px;width:17.0px">D</span>
<span style="left:255.8px;width:21.9px">53129</span>
<span style="left:278.1px;width:45.8px">Bonn</span>
<span style="left:324.3px;width:74.1px">Kessenicher Str. 3</span>
</div>
<div style="left:23.15px;top:9.5px;width:0.6px;height:255px;background:#d2d2d2"></div>
<div style="left:37.15px;top:9.5px;width:0.6px;height:255px;background:#d2d2d2"></div>
<div style="left:124.05px;top:9.5px;width:0.6px;height:255px;background:#d2d2d2"></div>
<div style="left:167.35px;top:9.5px;width:0.6px;height:255px;background:#d2d2d2"></div>
<div style="left:189.55px;top:9.5px;width:0.6px;height:255px;background:#d2d2d2"></div>
<div style="left:210.05px;top:9.5px;width:0.6px;height:255px;background:#d2d2d2"></div>
<div style="left:238.65px;top:9.5px;width:0.6px;height:255px;background:#d2d2d2"></div>
<div style="left:256.05px;top:9.5px;width:0.6px;height:255px;background:#d2d2d2"></div>
<div style="left:278.35px;top:9.5px;width:0.6px;height:255px;background:#d2d2d2"></div>
<div style="left:324.55px;top:9.5px;width:0.6px;height:255px;background:#d2d2d2"></div>
<div style="left:399.05px;top:9.5px;width:0.6px;height:255px;background:#d2d2d2"></div>
<div style="left:431.85px;top:9.5px;width:0.6px;height:255px;background:#d2d2d2"></div>
</div>
<div style="left:5px;top:346.2px;width:432px;height:0.6px;background:#d8d8d8"></div>
<div style="left:439.1px;top:80.6px;width:3.9px;height:276px;background:#eee;border-left:0.7px solid #c6c6c6;border-right:0.7px solid #c6c6c6"></div>
<div class="rp" style="left:446.3px;top:80.5px;width:135.9px;height:201.6px;background:#fff;box-shadow:inset 0 0 0 0.7px #b8b8b8">
<div style="left:10.6px;top:0;width:0.7px;height:200px;background:#bdbdbd"></div>
<div style="left:1.2px;top:9.2px;width:122px;height:0.7px;background:#8c8c8c"></div>
<div style="left:1.2px;top:51.2px;width:122px;height:0.7px;background:#8c8c8c"></div>
<div style="left:1.2px;top:85.9px;width:122px;height:0.7px;background:#8c8c8c"></div>
<span style="left:12.3px;top:1.5px">EDV</span>
<span style="left:12.3px;top:10.5px">Firma</span>
<span style="left:12.3px;top:18.5px">Bouv-Duisdorf (14.06.2000)</span>
<span style="left:12.3px;top:26.5px">Duisdorf...</span>
<span style="left:12.3px;top:34.5px">D 53333 Bonn</span>
<span style="left:12.3px;top:42.5px">Sehr geehrte Damen und Herren</span>
<span style="left:12.3px;top:54.5px">0228-62 60 55 (T1)</span>
<span style="left:12.3px;top:62.5px">0228- 62 71 67 (F1)</span>
<span style="left:12.3px;top:69.5px">info@Bouv.de</span>
<span style="left:12.3px;top:77.5px">www.bouv.de</span>
<svg style="left:0;top:0" width="12" height="110" viewBox="0 0 12 110">
<g><path d="M3.6,17.4 q0,-2.8 1.4,-3 q-1,-0.8 -0.6,-2 q0.6,-1.4 2.2,-1.2 q1.6,0.2 1.6,1.8 q0,1 -0.8,1.5 q1.4,0.4 1.4,2.9z" fill="#1a1a1a"/><rect x="6" y="14.6" width="1.8" height="1.9" fill="#f4f4f4"/><rect x="3.8" y="17.3" width="5" height="0.8" fill="#28c4c4"/></g>
<g><rect x="3" y="55.2" width="6.6" height="4" rx="0.9" fill="#efe04a" stroke="#2a2a2a" stroke-width="0.6"/><path d="M2.8,55.6 q3.4,-2.6 7,0" stroke="#1e1e1e" stroke-width="1.1" fill="none"/><rect x="5" y="56.4" width="2.6" height="1.6" fill="#8a7a10"/></g>
<g><ellipse cx="6.3" cy="64.9" rx="3.3" ry="2.6" fill="#d4d4d4" stroke="#3a3a3a" stroke-width="0.6"/><circle cx="5.4" cy="64.9" r="1.2" fill="#333"/><circle cx="7.8" cy="64" r="0.7" fill="#555"/></g>
<g><rect x="3.4" y="69.6" width="5.8" height="5.8" fill="#eaf1fb" stroke="#3d6fc0" stroke-width="0.7"/><rect x="4.4" y="70.4" width="2" height="2" fill="#5a8fd8"/><path d="M4.4,74.4 l1.6,-1.6 l1,0.8 l1.2,-1.6" stroke="#3a9a4a" stroke-width="0.6" fill="none"/></g>
<g><circle cx="6.2" cy="80.5" r="2.8" fill="#1c3fa8" stroke="#0a1230" stroke-width="0.5"/><path d="M4.6,79.2 q1.6,-1.2 2.8,0.4 q-0.4,1.8 -2,1.4z M6.4,81.6 q1.4,-0.4 1.6,0.6 q-1,0.9 -1.6,-0.6z" fill="#3cae4a"/></g>
<g><rect x="5.4" y="91.4" width="2.8" height="4" fill="#8d96a6"/><rect x="4.4" y="92.8" width="1.2" height="2.6" fill="#a8afbc"/><path d="M4.2,91 l1.3,-1.8 l1.3,1.8z" fill="#2a62d8"/><rect x="5.1" y="90.8" width="0.8" height="1.3" fill="#2a62d8"/></g>
</svg>
</div>
<div class="rp" style="left:446.3px;top:285.4px;width:135.9px;height:61.2px;background:#fff;box-shadow:inset 0 0 0 0.7px #b8b8b8">
<div style="left:10.6px;top:0;width:0.7px;height:60px;background:#bdbdbd"></div>
<svg style="left:2.7px;top:1.7px" width="8" height="8" viewBox="0 0 8 8"><circle cx="3.7" cy="3.7" r="3.1" fill="#fdfdfd" stroke="#4aa0c0" stroke-width="0.65"/><rect x="3.25" y="3" width="0.95" height="2.7" fill="#2a6fb0"/><rect x="3.25" y="1.6" width="0.95" height="0.95" fill="#2a6fb0"/></svg>
<span style="left:12.3px;top:1.4px">Dies ist eine mehrzeiliege Info im</span>
<span style="left:12.3px;top:13.4px">Infofeld. Die Länge des Textes ist nicht begrenzt.</span>
</div>
<div style="left:446.3px;top:346.4px;width:135.9px;height:7.8px;background:#fff"></div>
<div style="left:446.3px;top:346.3px;width:135.9px;height:0.6px;background:#999"></div>
<svg style="left:445.7px;top:346.6px" width="140" height="9" viewBox="0 0 140 9"><path d="M3.6,0.6 l1.6,6.6 h30 l1.6,-6.6 M36.6,0.6 l1.6,6.6 h36 l1.6,-6.6 M76,0.6 l1.6,6.6 h23.6 l1.6,-6.6" stroke="#808080" stroke-width="0.5" fill="#fff"/></svg>
<span style="left:452.7px;top:346px;line-height:8px;font-size:5.2px;color:#222">1 Adresse</span>
<span style="left:485.3px;top:346px;line-height:8px;font-size:5.2px;color:#222">2 Dokumente</span>
<span style="left:524.3px;top:346px;line-height:8px;font-size:5.2px;color:#222">3 Bilder</span>
<div style="left:0;top:356.6px;width:586px;height:1px;background:#6a6a6a"></div>
<div class="sb" style="left:0;top:357.5px;width:586px;height:10px;background:#f7f7f7">
<span style="left:2.3px">5 von 40 / 40</span>
<span style="left:77px">0 ma</span>
<span style="left:111.5px">10 kb</span>
<span style="left:146.5px">Erfasst 27.04.1998</span>
<span style="left:207.5px">Geändert 18.06.2021</span>
<span style="left:272px">DM</span>
<span style="left:347px">VonBSpiel.hdb</span>
<i style="left:73px"></i>
<i style="left:108.8px"></i>
<i style="left:133.8px"></i>
<i style="left:143.5px"></i>
<i style="left:204.7px"></i>
<i style="left:269px"></i>
<i style="left:282.4px"></i>
<i style="left:331.5px"></i>
<i style="left:343.3px"></i>
</div>
<div style="left:0;top:0;width:0.8px;height:367.5px;background:#1a1a1a"></div>
</div>
<div style="left:0;top:495px;width:838px;height:18px;background:#2d2d2d"></div>
<svg style="left:0;top:495px" width="240" height="18" viewBox="0 0 240 18">
<circle cx="8.9" cy="9" r="6.8" fill="#ececec"/><circle cx="8.9" cy="9" r="5.3" fill="#6cb33f"/><path d="M6.3,6 v4.3 q0,1.5 1.5,1.5 h2.4 q1.5,0 1.5,-1.5 v-2.2 q0,-1 -0.9,-1 q-0.9,0 -0.9,1 v2 M9,8 q0,-1 -0.9,-1" stroke="#fff" stroke-width="0.95" fill="none" stroke-linecap="round"/>
<rect x="21.3" y="3.6" width="13.4" height="10.8" rx="0.8" fill="#6f9a48"/><rect x="21.9" y="5" width="12.2" height="8.8" fill="#84b057"/><rect x="22.4" y="4.1" width="1" height="0.6" fill="#dfe"/>
<defs><linearGradient id="ff" x1="0" y1="0" x2="0" y2="1"><stop offset="0" stop-color="#f7a04a"/><stop offset="1" stop-color="#ec7424"/></linearGradient><linearGradient id="io" x1="0" y1="0" x2="0" y2="1"><stop offset="0" stop-color="#3ccf3c"/><stop offset="1" stop-color="#1f961f"/></linearGradient></defs>
<rect x="42.6" y="2.4" width="12.6" height="12.8" rx="2.4" fill="url(#ff)"/><circle cx="48.9" cy="8.9" r="3.9" fill="#fff"/><path d="M46.3,7 q1.8,3.4 5.2,0.4 q0,3.8 -3,3.8 q-2.4,-0.4 -2.2,-4.2z" fill="#ee7e2e"/><path d="M50.4,5.2 q1.8,0.8 2,3" stroke="#fff" stroke-width="0.9" fill="none"/>
<rect x="62.9" y="2.8" width="12.8" height="12.2" rx="1.8" fill="#1b1b1b" stroke="#454545" stroke-width="0.7"/><path d="M65,5 v1.6 M66.4,6.9 h1.6" stroke="#eee" stroke-width="0.7" fill="none"/>
<path d="M84.4,3.2 h4.2 l1,1.2 h-5.2z" fill="#f0f0f0"/><path d="M83,4.6 q0,-1 1,-1 h3.8 l1.2,1.2 h5.8 q1,0 1,1 v7.6 q0,1 -1,1 h-10.8 q-1,0 -1,-1z" fill="#769f4c"/><path d="M83,6.4 h12.8 v7 q0,1 -1,1 h-10.8 q-1,0 -1,-1z" fill="#8cb75c"/>
<circle cx="109" cy="9" r="6.4" fill="#eef2fa"/><circle cx="109" cy="9" r="5.2" fill="none" stroke="#3f7fd8" stroke-width="1.5"/><circle cx="109" cy="9" r="3.6" fill="#fdfdfd" stroke="#9dbdf0" stroke-width="0.5" stroke-dasharray="0.6 0.6"/>
<rect x="122.3" y="2.4" width="13.6" height="13.4" rx="0.6" fill="url(#io)"/>
<rect x="144.8" y="2.4" width="9.4" height="13" rx="0.8" fill="#d8413c"/><rect x="144.8" y="13.2" width="9.4" height="2.2" fill="#e88a86"/><circle cx="149.5" cy="8" r="3.1" fill="#2f74e6"/>
<rect x="163.2" y="2.6" width="9.4" height="6.6" fill="#f2f6fc" stroke="#3d77c8" stroke-width="0.7"/><rect x="163.2" y="2.6" width="9.4" height="1.7" fill="#3d77c8"/><rect x="166.6" y="8" width="9.6" height="6.6" fill="#f6f9ff" stroke="#3d77c8" stroke-width="0.7"/><rect x="166.6" y="8" width="9.6" height="1.7" fill="#3d77c8"/><rect x="168" y="11" width="6.4" height="1.8" fill="#8db4ec"/><path d="M165,9.6 v2.8 l-1.1,-1.1 M165,12.4 l1.1,-1.1 M172.6,2.4 q2.6,0.6 2.8,3.6 l1,-1.2 M175.4,6 l-1.3,-0.8" stroke="#2fa03a" stroke-width="1.1" fill="none"/>
<g stroke="#4a4200" stroke-width="0.45"><ellipse cx="187.3" cy="12.8" rx="4.6" ry="1.9" fill="#a89600"/><ellipse cx="187.3" cy="11" rx="4.6" ry="1.9" fill="#cdb900"/><ellipse cx="187.3" cy="9.2" rx="4.6" ry="1.9" fill="#a89600"/><ellipse cx="187.3" cy="7.4" rx="4.6" ry="1.9" fill="#cdb900"/><ellipse cx="187.3" cy="5.6" rx="4.6" ry="1.9" fill="#d9c720"/><circle cx="193" cy="11" r="2.9" fill="#c4ae00"/></g>
<path d="M204,8.6 l3,-3.4 h7.8 l-2.4,3.4z" fill="#f4f4f4" stroke="#2a7a3a" stroke-width="0.5"/><path d="M206.4,7.6 l1.4,-1.6 h4 l-1.2,1.6z" fill="#2f9a4e"/><rect x="204" y="8.6" width="8.4" height="4.6" fill="#2f8f46"/><rect x="205" y="9.7" width="6.2" height="1.7" fill="#9fdcd0"/><path d="M212.4,8.6 l2.4,-3.4 v4.4 l-2.4,3.6z" fill="#1f6f36"/><path d="M202.2,3 l3,0 l-3,2.8z" fill="#e0202a"/>
<rect x="201" y="16.2" width="17" height="1.8" fill="#a6c97c"/>
</svg>
<span style="left:122.3px;top:496.6px;width:13.6px;height:14px;line-height:14px;text-align:center;font-family:'Liberation Serif',serif;font-weight:bold;font-size:12px;color:#fff">io</span>
<span style="left:105.5px;top:499.4px;width:7px;height:9px;line-height:9px;text-align:center;font-weight:bold;font-size:7.5px;color:#2f6fd0">€</span>
<span style="left:146.5px;top:499.2px;width:6px;height:8px;line-height:8px;text-align:center;font-weight:bold;font-size:5.6px;color:#fff">€</span>
<svg style="left:725px;top:495px" width="50" height="18" viewBox="0 0 50 18">
<path d="M4.2,6.3 l3.4,-1.2 l3.4,1.2 v3 q-0.4,3 -3.4,4.2 q-3,-1.2 -3.4,-4.2z" fill="#e8e8e8"/><path d="M7.6,6.4 v6 M5.4,9 h4.4" stroke="#2d2d2d" stroke-width="0.7"/><circle cx="10.6" cy="12.6" r="1.3" fill="#e8662a"/>
<rect x="15.8" y="7.6" width="7.2" height="3.8" rx="0.6" fill="#f0f0f0"/><rect x="17.2" y="5.6" width="4.4" height="1.6" fill="#f0f0f0"/><rect x="17.2" y="10.4" width="4.4" height="2.6" fill="#f0f0f0" stroke="#2d2d2d" stroke-width="0.5"/>
<rect x="29.2" y="5.2" width="2.6" height="2.4" fill="#f0f0f0"/><rect x="26.6" y="10.6" width="2.6" height="2.4" fill="#f0f0f0"/><rect x="31.8" y="10.6" width="2.6" height="2.4" fill="#f0f0f0"/><path d="M30.5,7.6 v1.6 M27.9,10.6 v-1.4 h5.2 v1.4" stroke="#f0f0f0" stroke-width="0.7" fill="none"/>
<path d="M38.2,7.8 h1.6 l2.2,-2 v6.6 l-2.2,-2 h-1.6z" fill="#f0f0f0"/><path d="M43.2,7.2 q1.2,1.8 0,3.6 M44.6,6 q2,3 0,6" stroke="#f0f0f0" stroke-width="0.7" fill="none"/>
</svg>
<span style="left:774.8px;top:495px;line-height:18.6px;font-family:'Liberation Sans',sans-serif;font-weight:bold;font-size:5.78px;color:#f2f2f2">Freitag, 18. Juni, 11:49</span>
</body></html>
